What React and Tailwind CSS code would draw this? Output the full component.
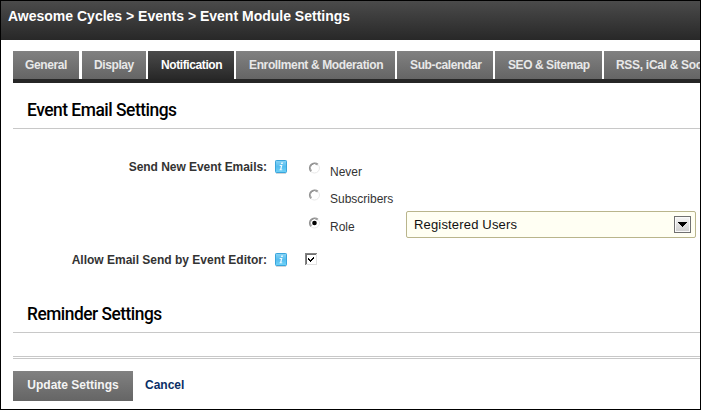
const tabs = [
  { label: 'General', size: 'w-[66px] mr-[3px]', text: 'tracking-[-0.4px]' },
  { label: 'Display', size: 'w-[64px] mr-[2px]', text: 'tracking-[-0.4px]' },
  { label: 'Notification', size: 'w-[86px] mr-[2px]', text: 'tracking-[-0.4px] indent-[1px]', active: true },
  { label: 'Enrollment & Moderation', size: 'w-[159px] mr-[2px]', text: 'tracking-[-0.37px] indent-[1px]' },
  { label: 'Sub-calendar', size: 'w-[96px] mr-[2px]', text: 'tracking-[-0.37px] indent-[1px]' },
  { label: 'SEO & Sitemap', size: 'w-[107px] mr-[2px]', text: 'tracking-[-0.43px] indent-[1px]' },
  { label: 'RSS, iCal & Soc', size: 'w-[130px]', text: 'tracking-[-0.3px]' },
];

function InfoIcon() {
  return (
    <svg className="block h-[14px] w-[14px] shrink-0" viewBox="0 0 14 14">
      <defs>
        <linearGradient id="info" x1="0" y1="0" x2="0" y2="1">
          <stop offset="0" stopColor="#8ad4f5" />
          <stop offset="0.5" stopColor="#56bdef" />
          <stop offset="1" stopColor="#6fd3f8" />
        </linearGradient>
      </defs>
      <rect x="1" y="12.5" width="10" height="1.3" rx="0.6" fill="#c3c8cc" />
      <rect x="0.5" y="0.5" width="11" height="12" rx="0.8" fill="url(#info)" stroke="#39a5dc" />
      <path d="M6.3 2.6h1.7l-.3 1.3H6zM4.7 5.1h2.7L6.4 9.4h1l-.2.9H4.3l.2-.9h.6l.8-3.4H4.6z" fill="#effaff" />
    </svg>
  );
}

function Radio({ checked }) {
  return (
    <svg className="block h-3 w-3 shrink-0" viewBox="0 0 12 12">
      <circle cx="6.5" cy="6" r="5" fill="#fff" stroke="#e8e8e8" />
      <path d="M2.8 9.5A5.1 5.1 0 0 1 10 2.3" fill="none" stroke="#969696" strokeWidth="1.2" />
      <path d="M3.5 8.8A4.1 4.1 0 0 1 9.3 3" fill="none" stroke="#707070" strokeWidth=".7" />
      {checked && <circle cx="6.5" cy="6" r="2.3" fill="#000" />}
    </svg>
  );
}

function Checkbox() {
  return (
    <svg className="block h-3 w-3" viewBox="0 0 12 12" shapeRendering="crispEdges">
      <rect width="12" height="12" fill="#e0e0e0" />
      <path d="M0 0h12v1H1v11H0z" fill="#848484" />
      <path d="M1 1h10v1H2v9H1z" fill="#707070" />
      <rect x="2" y="2" width="9" height="9" fill="#fff" />
      <path d="M3 5h1v1h1v1h1V6h1V5h1V4h1v2H8v1H7v1H6v1H5V8H4V7H3z" fill="#000" />
    </svg>
  );
}

function SectionTitle({ children, text }) {
  return (
    <div className="h-[34px] border-b border-[#c8c8c8] pt-[1px] pl-[14px]">
      <h2 className={`w-max origin-left whitespace-nowrap font-['Roboto',sans-serif] text-[18px] leading-[28px] font-medium text-black ${text}`}>{children}</h2>
    </div>
  );
}

function Label({ children, text = '' }) {
  return (
    <div className="flex w-[276px] items-start justify-end gap-[8px]">
      <span className={`whitespace-nowrap text-[12px] leading-[14px] font-bold text-[#333] ${text}`}>{children}</span>
      <InfoIcon />
    </div>
  );
}

function Option({ children, checked }) {
  return (
    <label className="flex h-[14px] w-[98px] items-start gap-[10px]">
      <Radio checked={checked} />
      <span className="mt-[3px] text-[12px] leading-[14px] text-[#333]">{children}</span>
    </label>
  );
}

export default function App() {
  return (
    <div className="h-[410px] w-[701px] overflow-hidden border border-black bg-white font-['Liberation_Sans',Arial,sans-serif]">
      <header className="h-[39px] bg-linear-to-b from-[#4b4b4b] to-[#282828] pt-[7px] pl-[7px]">
        <h1 className="text-[14px] leading-[16px] font-bold whitespace-nowrap text-white">Awesome Cycles &gt; Events &gt; Event Module Settings</h1>
      </header>
      <div className="pt-[11px] pl-[12px]">
        <nav className="flex h-[32px] overflow-hidden border-b-4 border-[#262626]">
          {tabs.map((t) => (
            <div key={t.label} className={`h-[28px] shrink-0 bg-linear-to-b pl-[12px] text-[12px] leading-[28px] font-bold whitespace-nowrap ${t.size} ${t.text} ${t.active ? 'from-[#4b4b4b] to-[#282828] text-white' : 'from-[#818181] to-[#656565] text-[#e8e8e8]'}`}>{t.label}</div>
          ))}
        </nav>
        <div className="pt-[12px]">
          <SectionTitle text="tracking-[-0.5px] scale-x-[0.967]">Event Email Settings</SectionTitle>
        </div>
        <div className="flex pt-[31px]">
          <Label text="tracking-[-0.05px]">Send New Event Emails:</Label>
          <div className="ml-[19px] flex flex-col pt-[2px]">
            <div className="h-[27px]"><Option>Never</Option></div>
            <div className="h-[22px]"><Option>Subscribers</Option></div>
            <div className="flex h-[27px]">
              <div className="pt-[6px]"><Option checked>Role</Option></div>
              <div className="flex h-[27px] w-[290px] items-center justify-between rounded-[2px] border border-[#b9b58c] bg-[#fffff3] pr-[4px] pl-[7px]">
                <span className="text-[13px] leading-[16px] tracking-[0.17px] text-[#111]">Registered Users</span>
                <span className="flex h-[17px] w-[17px] items-center justify-center border border-[#707070] bg-linear-to-b from-[#f5f5f5] to-[#cfcfcf] shadow-[inset_0_0_0_1px_#fafafa]">
                  <svg className="h-[5px] w-[9px]" viewBox="0 0 9 5" shapeRendering="crispEdges"><path d="M0 0h9v1H8v1H7v1H6v1H5v1H4V4H3V3H2V2H1V1H0z" /></svg>
                </span>
              </div>
            </div>
          </div>
        </div>
        <div className="mt-[15px] flex h-[14px]">
          <Label>Allow Email Send by Event Editor:</Label>
          <div className="ml-[16px]"><Checkbox /></div>
        </div>
        <div className="pt-[32px]">
          <SectionTitle text="tracking-[-0.5px] scale-x-[0.962]">Reminder Settings</SectionTitle>
        </div>
        <div className="mt-[23px] h-[3px] border-y border-[#c8c8c8]" />
        <div className="mt-[12px] flex">
          <button className="h-[30px] w-[120px] bg-linear-to-b from-[#818181] to-[#656565] pb-[2px] text-[12px] leading-[28px] font-bold whitespace-nowrap text-[#f4f4f4]">Update Settings</button>
          <a className="ml-[12px] text-[12px] leading-[28px] font-bold text-[#0a2f66]">Cancel</a>
        </div>
      </div>
    </div>
  );
}
